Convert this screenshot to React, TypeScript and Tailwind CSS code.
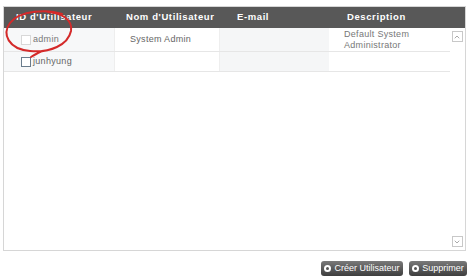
import { ChevronDown, ChevronUp } from "lucide-react";

const rows = [
  { id: "admin", name: "System Admin", email: "", desc: "Default System Administrator", faded: true },
  { id: "junhyung", name: "", email: "", desc: "", faded: false },
];

const App = () => {
  return (
    <div
      className="relative w-[470px] h-[278px] bg-white text-[9px] tracking-[0.3px] text-[#666]"
      style={{ fontFamily: '"Liberation Sans", Arial, sans-serif' }}
    >
      <div className="pt-[6px] pl-[3px] pr-[4px]">
        <div className="border border-[#d6d6d6] h-[245px] flex flex-col">
          <div className="flex h-[21px] bg-[#585858] text-white font-bold tracking-[0.6px] text-[9.5px] items-center whitespace-nowrap">
            <div className="w-[110px] pl-[12px]">ID d'Utilisateur</div>
            <div className="w-[105px] pl-[12px]">Nom d'Utilisateur</div>
            <div className="w-[110px] pl-[18px]">E-mail</div>
            <div className="flex-1 pl-[18px]">Description</div>
          </div>
          <div className="flex flex-1 min-h-0">
            <div className="flex-1 flex flex-col">
              {rows.map((r, i) => (
                <div
                  key={r.id}
                  className={`flex border-b border-[#e6e6e6] ${i === 0 ? "h-[24px]" : "h-[20px]"}`}
                >
                  <div className="w-[110px] bg-[#f7f8f9] flex items-center gap-[2px] pl-[17px]">
                    <span
                      className={`w-[10px] h-[10px] border bg-white ${r.faded ? "border-[#d8d8d8]" : "border-[#6a7c8c]"}`}
                    />
                    <span className={r.faded ? "text-[#777]" : "text-[#666]"}>{r.id}</span>
                  </div>
                  <div className="w-[105px] bg-white pl-[15px] flex items-center border-l border-[#eee]">
                    {r.name}
                  </div>
                  <div className="w-[110px] bg-[#f5f6f7] border-l border-[#eee]" />
                  <div className="flex-1 bg-white pl-[15px] pt-[1px] leading-[11px] text-[#777] flex items-start">
                    {r.desc && <span className="w-[80px]">{r.desc}</span>}
                  </div>
                </div>
              ))}
            </div>
            <div className="w-[14px] flex flex-col justify-between items-center pt-[3px] pb-[3px] mr-[1px]">
              <div className="w-[11px] h-[11px] border border-[#c8c8c8] flex items-center justify-center">
                <ChevronUp size={8} strokeWidth={2.5} color="#999" />
              </div>
              <div className="w-[11px] h-[11px] border border-[#c8c8c8] flex items-center justify-center">
                <ChevronDown size={8} strokeWidth={2.5} color="#999" />
              </div>
            </div>
          </div>
        </div>
        <div className="flex justify-end gap-[6px] mt-[10px] mr-[-1px]">
          <button className="h-[15px] w-[82px] rounded-[3px] bg-gradient-to-b from-[#7a7a7a] to-[#3e3e3e] text-white text-[9px] tracking-normal flex items-center justify-center gap-[3px] whitespace-nowrap">
            <span className="w-[7px] h-[7px] rounded-full bg-white flex items-center justify-center">
              <span className="w-[3px] h-[3px] bg-[#555] rounded-full" />
            </span>
            Créer Utilisateur
          </button>
          <button className="h-[15px] w-[58px] rounded-[3px] bg-gradient-to-b from-[#7a7a7a] to-[#3e3e3e] text-white text-[9px] tracking-normal flex items-center justify-center gap-[3px] whitespace-nowrap">
            <span className="w-[7px] h-[7px] rounded-full bg-white flex items-center justify-center">
              <span className="w-[3px] h-[3px] bg-[#555] rounded-full" />
            </span>
            Supprimer
          </button>
        </div>
      </div>
      <svg className="absolute left-0 top-0 pointer-events-none" width="100" height="70">
        <path
          d="M62 14 C 48 9, 20 10, 10 23 C 2 34, 8 49, 30 51 C 50 53, 68 45, 71 31 C 73 20, 62 13, 48 12 M 42 51 C 38 53, 34 55, 31 57"
          fill="none"
          stroke="#d42a2a"
          strokeWidth="2"
          strokeLinecap="round"
        />
      </svg>
    </div>
  );
};

export default App;
